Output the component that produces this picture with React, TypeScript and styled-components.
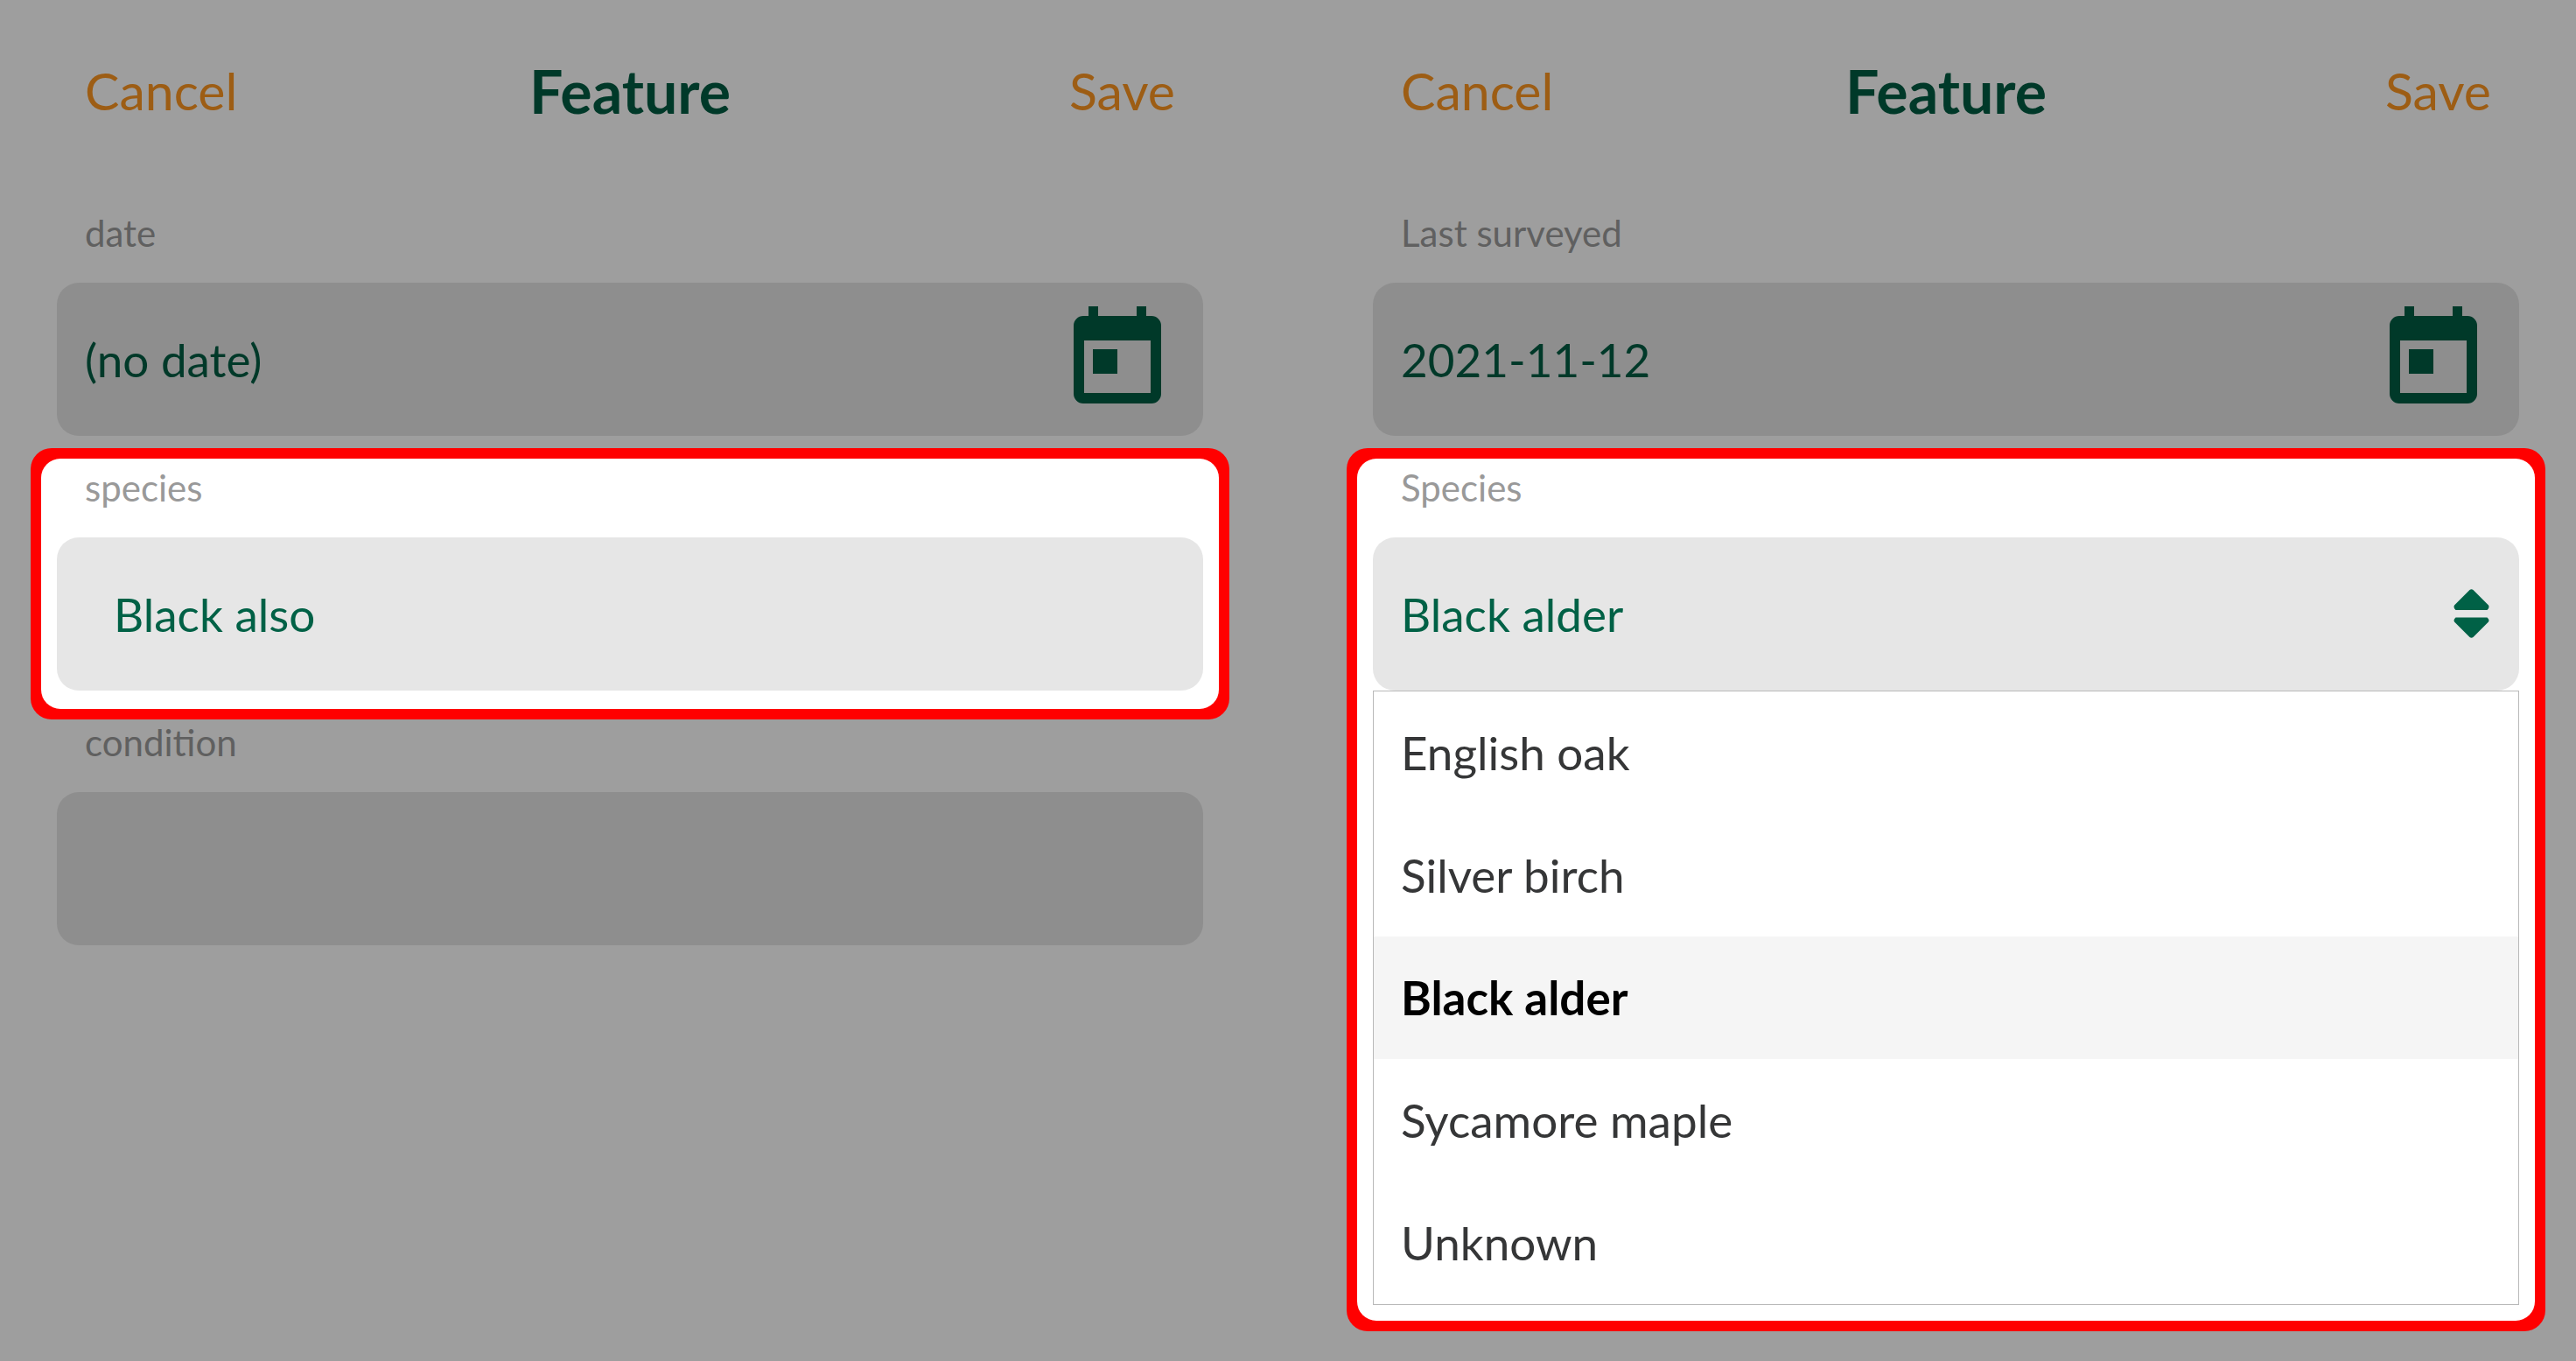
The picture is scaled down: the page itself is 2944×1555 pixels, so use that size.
import React, { useId, useState } from "react";
import styled, { createGlobalStyle } from "styled-components";

const GlobalStyle = createGlobalStyle`
  *, *::before, *::after { box-sizing: border-box; }
  body {
    margin: 0;
    background: #9e9e9e;
    font-family: Lato, "Open Sans", sans-serif;
  }
  button, input, select { font: inherit; }
`;

const Page = styled.main`
  display: grid;
  grid-template-columns: repeat(2, minmax(0, 1fr));
  gap: 64px;
  min-height: 100vh;
  background: #9e9e9e;
`;

const Panel = styled.section`
  padding: 0 65px;
`;

const Header = styled.header`
  display: grid;
  grid-template-columns: 1fr auto 1fr;
  align-items: center;
  height: 208px;
  padding: 0 32px;
`;

const Title = styled.h1`
  margin: 0;
  font-size: 68px;
  line-height: 82px;
  font-weight: 700;
  color: #003929;
`;

const HeaderButton = styled.button<{ $end?: boolean }>`
  justify-self: ${(p) => (p.$end ? "end" : "start")};
  padding: 0;
  border: 0;
  background: none;
  color: #9d5d14;
  font-size: 59px;
  line-height: 72px;
  cursor: pointer;
`;

const Form = styled.form`
  display: flex;
  flex-direction: column;
  gap: 14px;
  padding-top: 13px;
`;

const Field = styled.div`
  display: flex;
  flex-direction: column;
`;

const Ring = styled.div`
  margin: 0 -30px -33px;
  padding: 12px;
  border-radius: 24px;
  background: #ff0000;
`;

const Spotlight = styled.div<{ $open?: boolean }>`
  padding: 0 18px ${(p) => (p.$open ? 18 : 21)}px;
  border-radius: 22px;
  background: #ffffff;

  label { padding-top: 7px; color: #999999; }
`;

const Label = styled.label`
  padding: 19px 32px 31px;
  font-size: 42px;
  line-height: 52px;
  color: #606060;
`;

const Control = styled.div<{ $lit?: boolean }>`
  display: flex;
  align-items: center;
  height: 175px;
  border-radius: 25px;
  background: ${(p) => (p.$lit ? "#e6e6e6" : "#8e8e8e")};
  color: ${(p) => (p.$lit ? "#006146" : "#003929")};
`;

const TextInput = styled.input<{ $indent?: boolean }>`
  flex: 1;
  min-width: 0;
  height: 100%;
  padding: 0 32px 0 ${(p) => (p.$indent ? 65 : 32)}px;
  border: 0;
  outline: 0;
  background: none;
  color: inherit;
  font-size: 53px;
`;

const Select = styled.select`
  flex: 1;
  min-width: 0;
  height: 100%;
  padding: 0 32px;
  border: 0;
  outline: 0;
  appearance: none;
  background: none;
  color: inherit;
  font-size: 53px;
`;

const IconButton = styled.button`
  display: flex;
  margin-right: 48px;
  padding: 0;
  border: 0;
  background: none;
  color: inherit;
  cursor: pointer;
`;

const SortMark = styled.span`
  display: flex;
  margin-right: 34px;
`;

const Menu = styled.ul`
  margin: 0;
  padding: 0;
  border: 1px solid #b9b9b9;
  list-style: none;
`;

const MenuItem = styled.button<{ $selected: boolean }>`
  display: block;
  width: 100%;
  height: 140px;
  padding: 0 31px;
  border: 0;
  background: ${(p) => (p.$selected ? "#f5f5f5" : "transparent")};
  color: ${(p) => (p.$selected ? "#000000" : "#353637")};
  font-size: 53px;
  line-height: 64px;
  font-weight: ${(p) => (p.$selected ? 700 : 400)};
  text-align: left;
  cursor: pointer;
`;

const CalendarIcon = () => (
  <svg width="100" height="122" viewBox="0 0 100 122" aria-hidden="true">
    <path
      fill="currentColor"
      fillRule="evenodd"
      d="M17 0h11v11h44V0h11v11h6a11 11 0 0 1 11 11v78a11 11 0 0 1-11 11H11a11 11 0 0 1-11-11V22a11 11 0 0 1 11-11h6zM12 39v60h76V39zM22 49h28v28H22z"
    />
  </svg>
);

const SortIcon = () => (
  <svg width="41" height="57" viewBox="0 0 41 57" aria-hidden="true">
    <path
      fill="currentColor"
      d="M18.500 1q2-1.500 4 0L40 18.500q1.500 3-1.500 5.500h-36Q-.500 21.500 1 18.500zM2.500 32.500h36q3 2.500 1.500 5L22.500 55q-2 1.500-4 0L1 37.500q-1.500-2.500 1.500-5z"
    />
  </svg>
);

const SPECIES = ["English oak", "Silver birch", "Black alder", "Sycamore maple", "Unknown"];

function PanelHeader() {
  return (
    <Header>
      <HeaderButton type="button">Cancel</HeaderButton>
      <Title>Feature</Title>
      <HeaderButton type="button" $end>Save</HeaderButton>
    </Header>
  );
}

function DateField({ label, value }: { label: string; value: string }) {
  const id = useId();
  return (
    <Field>
      <Label htmlFor={id}>{label}</Label>
      <Control>
        <TextInput id={id} defaultValue={value} />
        <IconButton type="button" aria-label="Pick a date">
          <CalendarIcon />
        </IconButton>
      </Control>
    </Field>
  );
}

function TextField({ label, value, lit }: { label: string; value: string; lit?: boolean }) {
  const id = useId();
  return (
    <Field>
      <Label htmlFor={id}>{label}</Label>
      <Control $lit={lit}>
        <TextInput id={id} defaultValue={value} $indent />
      </Control>
    </Field>
  );
}

function SpeciesPicker() {
  const id = useId();
  const [species, setSpecies] = useState("Black alder");
  return (
    <Field>
      <Label htmlFor={id}>Species</Label>
      <Control $lit>
        <Select id={id} value={species} onChange={(e) => setSpecies(e.target.value)}>
          {SPECIES.map((name) => (
            <option key={name}>{name}</option>
          ))}
        </Select>
        <SortMark>
          <SortIcon />
        </SortMark>
      </Control>
      <Menu>
        {SPECIES.map((name) => (
          <li key={name}>
            <MenuItem type="button" $selected={name === species} onClick={() => setSpecies(name)}>
              {name}
            </MenuItem>
          </li>
        ))}
      </Menu>
    </Field>
  );
}

export default function App() {
  return (
    <>
      <GlobalStyle />
      <Page>
        <Panel>
          <PanelHeader />
          <Form>
            <DateField label="date" value="(no date)" />
            <Ring>
              <Spotlight>
                <TextField label="species" value="Black also" lit />
              </Spotlight>
            </Ring>
            <TextField label="condition" value="" />
          </Form>
        </Panel>
        <Panel>
          <PanelHeader />
          <Form>
            <DateField label="Last surveyed" value="2021-11-12" />
            <Ring>
              <Spotlight $open>
                <SpeciesPicker />
              </Spotlight>
            </Ring>
          </Form>
        </Panel>
      </Page>
    </>
  );
}
